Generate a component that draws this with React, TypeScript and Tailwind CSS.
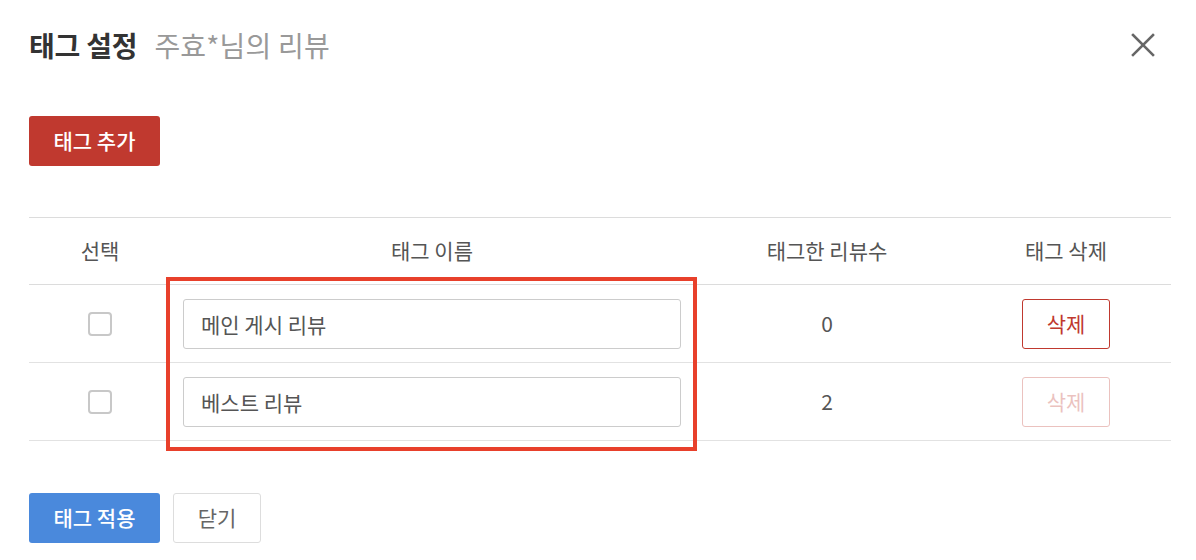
import React from 'react';

const tags = [
  { id: 1, name: '메인 게시 리뷰', count: 0, deletable: true },
  { id: 2, name: '베스트 리뷰', count: 2, deletable: false },
];

export default function App() {
  return (
    <div
      className="w-[1196px] h-[560px] bg-white pl-[29px] pr-[25px] overflow-hidden"
      style={{ fontFamily: '"Noto Sans CJK KR", "Noto Sans", sans-serif' }}
    >
      {/* Modal header */}
      <div className="h-[90px] flex items-center justify-between pr-[15px]">
        <div className="flex items-baseline gap-[17px]">
          <h1 className="text-[28px] font-bold text-[#333] tracking-[-0.2px]">태그 설정</h1>
          <span className="text-[28px] text-[#999] tracking-[0.2px]">주효*님의 리뷰</span>
        </div>
        <button className="w-[26px] h-[26px] flex items-center justify-center text-[#666]">
          <svg width="24" height="24" viewBox="0 0 24 24" fill="none" stroke="currentColor" strokeWidth="2.6" strokeLinecap="square">
            <line x1="2" y1="2" x2="22" y2="22" />
            <line x1="22" y1="2" x2="2" y2="22" />
          </svg>
        </button>
      </div>

      <button className="mt-[26px] w-[131px] h-[50px] rounded-[3px] bg-[#c0392f] text-white text-[21px] font-medium">
        태그 추가
      </button>

      {/* Tag table */}
      <div className="relative mt-[51px]">
        <div className="grid grid-cols-[142px_522px_268px_210px] h-[68px] items-center border-y border-[#dcdcdc] text-[21px] text-[#555]">
          <div className="text-center">선택</div>
          <div className="text-center">태그 이름</div>
          <div className="text-center">태그한 리뷰수</div>
          <div className="text-center">태그 삭제</div>
        </div>
        {tags.map((tag) => (
          <div
            key={tag.id}
            className="grid grid-cols-[142px_522px_268px_210px] h-[78px] items-center border-b border-[#e2e2e2] text-[21px] text-[#555]"
          >
            <div className="flex justify-center">
              <span className="w-[24px] h-[24px] rounded-[4px] border-2 border-[#c8c8c8] bg-white"></span>
            </div>
            <div className="px-[12px]">
              <input
                readOnly
                value={tag.name}
                className="w-full h-[50px] rounded-[3px] border border-[#cccccc] px-[17px] text-[21px] text-[#555] outline-none"
              />
            </div>
            <div className="text-center">{tag.count}</div>
            <div className="flex justify-center">
              <button
                className={`w-[88px] h-[50px] rounded-[3px] border border-[#c0392f] text-[#c0392f] text-[21px] ${
                  tag.deletable ? '' : 'opacity-30'
                }`}
              >
                삭제
              </button>
            </div>
          </div>
        ))}
        {/* Highlight annotation */}
        <div className="absolute left-[137px] top-[60px] w-[531px] h-[174px] border-[4px] border-[#e8402b] pointer-events-none"></div>
      </div>

      {/* Footer actions */}
      <div className="mt-[52px] flex gap-[13px]">
        <button className="w-[131px] h-[50px] rounded-[3px] bg-[#4a89dc] text-white text-[21px] font-medium">
          태그 적용
        </button>
        <button className="w-[88px] h-[50px] rounded-[3px] border border-[#dddddd] bg-white text-[#666] text-[21px]">
          닫기
        </button>
      </div>
    </div>
  );
}
